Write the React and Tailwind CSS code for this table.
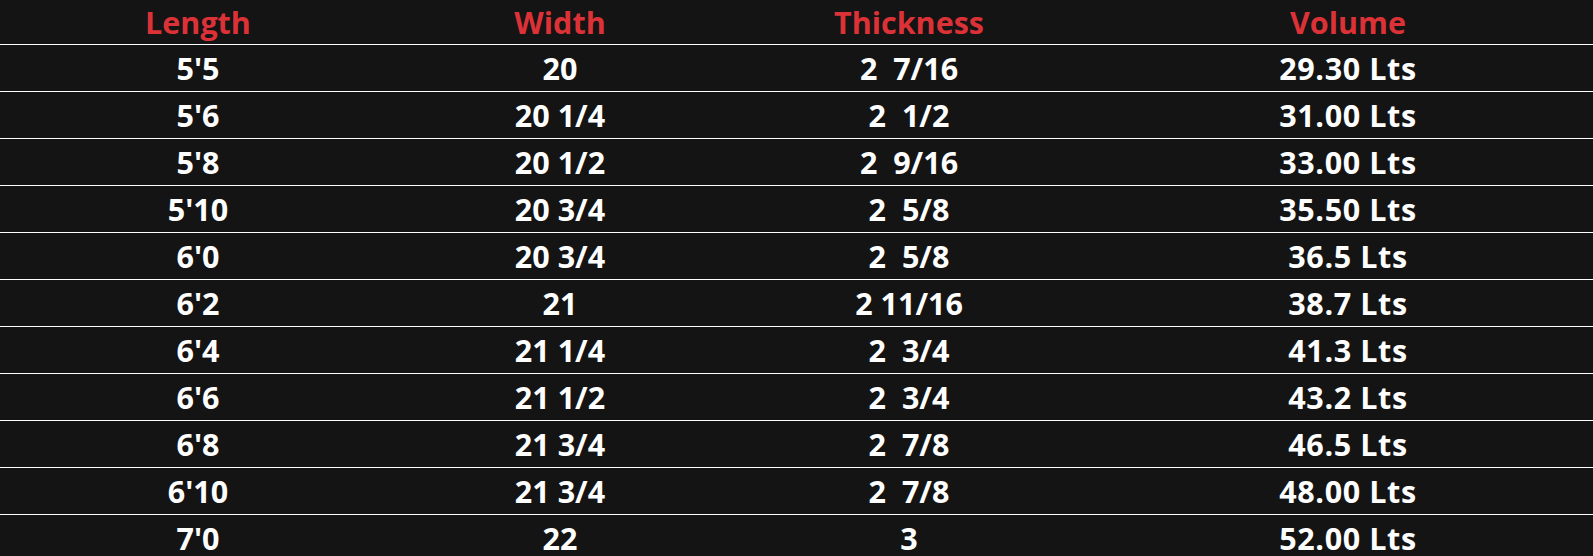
const rows = [
  ["5'5", '20', '2  7/16', '29.30 Lts'],
  ["5'6", '20 1/4', '2  1/2', '31.00 Lts'],
  ["5'8", '20 1/2', '2  9/16', '33.00 Lts'],
  ["5'10", '20 3/4', '2  5/8', '35.50 Lts'],
  ["6'0", '20 3/4', '2  5/8', '36.5 Lts'],
  ["6'2", '21', '2 11/16', '38.7 Lts'],
  ["6'4", '21 1/4', '2  3/4', '41.3 Lts'],
  ["6'6", '21 1/2', '2  3/4', '43.2 Lts'],
  ["6'8", '21 3/4', '2  7/8', '46.5 Lts'],
  ["6'10", '21 3/4', '2  7/8', '48.00 Lts'],
  ["7'0", '22', '3', '52.00 Lts'],
]

const cols = 'grid grid-cols-[396px_328px_370px_508px]'

export default function App() {
  return (
    <div className="min-h-screen overflow-hidden bg-[#141414] font-['Open_Sans',sans-serif] font-bold text-[30.5px]">
      <div className={`${cols} h-[44px] items-center text-[#dc3237]`}>
        {['Length', 'Width', 'Thickness', 'Volume'].map(h => (
          <div key={h} className="text-center leading-none">{h}</div>
        ))}
      </div>
      {rows.map((r, i) => (
        <div key={i} className={`${cols} h-[47px] items-center border-t border-white text-white`}>
          {r.map((c, j) => (
            <div key={j} className={`text-center leading-none whitespace-pre ${j === 3 ? 'tracking-[0.6px]' : ''}`}>{c}</div>
          ))}
        </div>
      ))}
    </div>
  )
}
